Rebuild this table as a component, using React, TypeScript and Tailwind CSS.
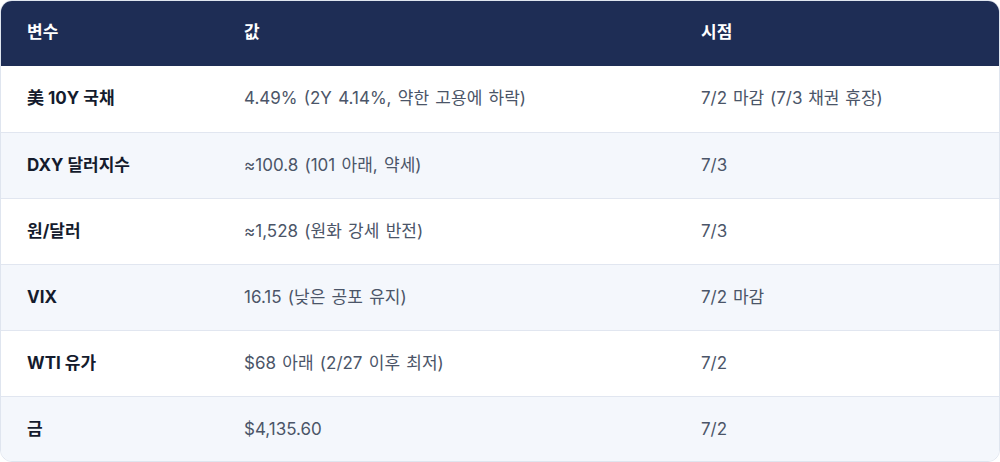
const rows = [
  { name: "美 10Y 국채", value: "4.49% (2Y 4.14%, 약한 고용에 하락)", time: "7/2 마감 (7/3 채권 휴장)" },
  { name: "DXY 달러지수", value: "≈100.8 (101 아래, 약세)", time: "7/3" },
  { name: "원/달러", value: "≈1,528 (원화 강세 반전)", time: "7/3" },
  { name: "VIX", value: "16.15 (낮은 공포 유지)", time: "7/2 마감" },
  { name: "WTI 유가", value: "$68 아래 (2/27 이후 최저)", time: "7/2" },
  { name: "금", value: "$4,135.60", time: "7/2" },
];

export default function App() {
  return (
    <div className="w-[1000px] h-[462px] bg-white font-['Inter','Noto_Sans_CJK_KR',sans-serif]">
      <div className="h-full rounded-xl border border-[#dfe5ef] overflow-hidden">
        <div className="grid grid-cols-[217px_457px_1fr] h-[65px] items-center bg-[#1e2d55] text-white text-[17px] font-bold pb-[2px]">
          <div className="pl-[26px]">변수</div>
          <div className="pl-[26px]">값</div>
          <div className="pl-[26px]">시점</div>
        </div>
        {rows.map((r, i) => (
          <div
            key={r.name}
            className={
              "grid grid-cols-[217px_457px_1fr] h-[66px] items-center text-[17px] " +
              (i % 2 === 0 ? "bg-white" : "bg-[#f4f7fc]") +
              (i > 0 ? " border-t border-[#e1e6f0]" : "")
            }
          >
            <div className="pl-[26px] font-bold text-[#141b2d]">{r.name}</div>
            <div className="pl-[26px] text-[#4b5568] [word-spacing:1.5px]">{r.value}</div>
            <div className="pl-[26px] text-[#4b5568] [word-spacing:1px]">{r.time}</div>
          </div>
        ))}
      </div>
    </div>
  );
}
